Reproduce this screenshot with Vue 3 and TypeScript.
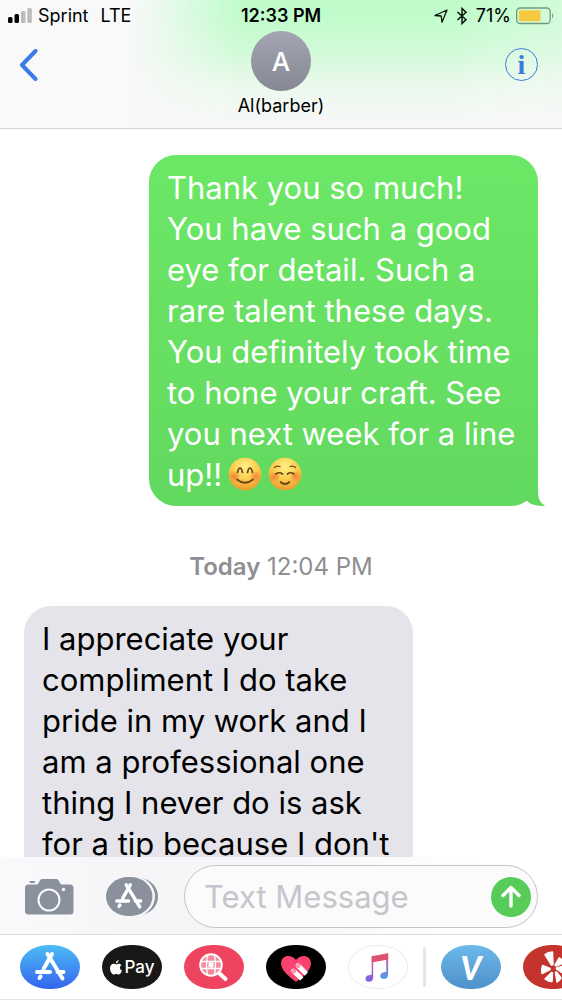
<script setup lang="ts">
import { ref } from 'vue'

interface Message {
  id: number
  from: 'me' | 'them'
  text: string
  emojis: ('blush' | 'relaxed')[]
}

const contact = { initial: 'A', name: 'Al(barber)' }

const sent: Message = {
  id: 1,
  from: 'me',
  text: 'Thank you so much!\nYou have such a good\neye for detail. Such a\nrare talent these days.\nYou definitely took time\nto hone your craft. See\nyou next week for a line\nup!!',
  emojis: ['blush', 'relaxed'],
}

const received: Message = {
  id: 2,
  from: 'them',
  text: "I appreciate your\ncompliment I do take\npride in my work and I\nam a professional one\nthing I never do is ask\nfor a tip because I don't",
  emojis: [],
}

const draft = ref('')
</script>

<template>
  <div class="phone">
    <header class="top">
      <div class="status">
        <div class="status-left">
          <svg class="signal" viewBox="0 0 24 16" aria-hidden="true">
            <rect x="0" y="9" width="4.500" height="6" rx="1.500" fill="#000" />
            <rect x="6.500" y="6" width="4.500" height="9" rx="1.500" fill="#000" />
            <rect x="13" y="3" width="4.500" height="12" rx="1.500" fill="#bcbcbe" />
            <rect x="19.300" y="0" width="4.500" height="15" rx="1.500" fill="#bcbcbe" />
          </svg>
          <span>Sprint</span>
          <span class="network">LTE</span>
        </div>
        <strong class="clock">12:33 PM</strong>
        <div class="status-right">
          <svg class="locate" viewBox="0 0 14 14" aria-hidden="true">
            <path d="M1 6.500 13 1 8 13.200 7.200 7Z" fill="none" stroke="#0c150e" stroke-width="1.300" stroke-linejoin="round" />
          </svg>
          <svg class="bluetooth" viewBox="0 0 12 18" aria-hidden="true">
            <path d="M1.500 5 10 12.700 6 16.500V1.500L10 5.300 1.500 13" fill="none" stroke="#0c150e" stroke-width="1.500" />
          </svg>
          <span>71%</span>
          <svg class="battery" viewBox="0 0 38 18" aria-hidden="true">
            <rect x="0.700" y="1" width="33.500" height="15.500" rx="3.500" fill="none" stroke="#75967d" stroke-width="1.300" />
            <rect x="3" y="3.200" width="21.500" height="11" rx="1" fill="#f8c93e" />
            <path d="M36 6q2.200 2.700 0 5.500Z" fill="#75967d" />
          </svg>
        </div>
      </div>
      <div class="nav">
        <button class="back" type="button" aria-label="Back">
          <svg viewBox="0 0 20 32" aria-hidden="true">
            <path d="M17.500 2 4 16 17.500 30" fill="none" stroke="#3b7be6" stroke-width="4" stroke-linecap="round" stroke-linejoin="round" />
          </svg>
        </button>
        <div class="contact">
          <div class="avatar">{{ contact.initial }}</div>
          <h1>{{ contact.name }}</h1>
        </div>
        <button class="info" type="button" aria-label="Details">i</button>
      </div>
    </header>

    <main class="thread">
      <div class="bubble me">
        <span>{{ sent.text }}</span>
        <svg v-for="e in sent.emojis" :key="e" class="emoji" :class="e" viewBox="0 0 34 34" role="img" :aria-label="e">
          <defs>
            <radialGradient :id="'skin-' + e" cx="50%" cy="28%" r="72%">
              <stop offset="0" stop-color="#fff08a" />
              <stop offset="0.500" stop-color="#fbd050" />
              <stop offset="1" stop-color="#ee9a2c" />
            </radialGradient>
            <radialGradient :id="'cheek-' + e">
              <stop offset="0" stop-color="#f4683c" stop-opacity="0.750" />
              <stop offset="1" stop-color="#f4683c" stop-opacity="0" />
            </radialGradient>
          </defs>
          <circle cx="17" cy="17" r="16.300" :fill="`url(#skin-${e})`" />
          <circle cx="6.500" cy="19.500" r="6" :fill="`url(#cheek-${e})`" />
          <circle cx="27.500" cy="19.500" r="6" :fill="`url(#cheek-${e})`" />
          <g fill="none" stroke="#6d4312" stroke-width="1.700" stroke-linecap="round" stroke-linejoin="round">
            <template v-if="e === 'blush'">
              <path d="M9.500 15.500Q10.500 11 12 11T14.500 15.500M19.500 15.500Q20.500 11 22 11T24.500 15.500" />
              <path d="M9 22.500Q17 29 25 22.500" />
            </template>
            <template v-else>
              <path d="M6.500 10.500Q8.500 8.500 12 9.500M22 9.500Q25.500 8.500 27.500 10.500" stroke-width="1.300" />
              <path d="M8 17Q11.500 14.500 14.500 17M19.500 17Q22.500 14.500 26 17" />
              <path d="M12.500 25Q17 29 21.500 25" />
            </template>
          </g>
        </svg>
        <svg class="tail" viewBox="0 0 30 27" aria-hidden="true">
          <path d="M0 0H22V13C22 19 24 24 29.500 27 21 27 15 26 11 22Z" fill="#62d95f" />
        </svg>
      </div>
      <p class="stamp"><b>Today</b> <time datetime="12:04">12:04 PM</time></p>
      <div class="bubble them">{{ received.text }}</div>
    </main>

    <form class="composer" @submit.prevent>
      <button class="tool camera" type="button" aria-label="Camera">
        <svg viewBox="0 0 49 37" aria-hidden="true">
          <path d="M3.500 6.500H12C14 6.500 14 1 17.500 1H31C34.500 1 34.500 6.500 37 6.500H45Q48.500 6.500 48.500 10V33Q48.500 36.500 45 36.500H3.500Q0 36.500 0 33V10Q0 6.500 3.500 6.500Z" fill="#8a919c" />
          <rect x="4.500" y="3" width="5.500" height="2" rx="1" fill="#8a919c" />
          <circle cx="24" cy="22" r="10.500" fill="none" stroke="#fafafc" stroke-width="2" />
          <circle cx="38.500" cy="11.500" r="1.700" fill="#fafafc" />
        </svg>
      </button>
      <button class="tool drawer" type="button" aria-label="Apps">
        <svg viewBox="0 0 52 39" aria-hidden="true">
          <rect x="10" y="1" width="42" height="37" rx="19" ry="18.500" fill="#8a919c" />
          <rect x="1" y="-1" width="48" height="41" rx="22" ry="20.500" fill="#f8f8fb" />
          <rect x="0" y="0" width="46.500" height="39" rx="22" ry="19.500" fill="#8a919c" />
          <g transform="translate(9 6) scale(0.900)" fill="none" stroke="#fff" stroke-width="3.800" stroke-linecap="round">
            <path d="M17 2 8.500 17M12.500 2 27.500 26.500M2 20H15M22.500 20H28.500M5.500 24.500 4.500 26" />
          </g>
        </svg>
      </button>
      <div class="field">
        <input v-model="draft" type="text" placeholder="Text Message" aria-label="Text Message" />
        <button class="send" type="submit" aria-label="Send">
          <svg viewBox="0 0 40 40" aria-hidden="true">
            <path d="M20 29V11M12 18.500 20 10.500 28 18.500" fill="none" stroke="#fff" stroke-width="3.400" stroke-linecap="round" stroke-linejoin="round" />
          </svg>
        </button>
      </div>
    </form>

    <nav class="apps" aria-label="iMessage apps">
      <button class="app store" type="button" aria-label="App Store">
        <svg viewBox="0 0 60 44" aria-hidden="true">
          <g transform="translate(15 7)" fill="none" stroke="#fff" stroke-width="4" stroke-linecap="round">
            <path d="M17 2 8.500 17M12.500 2 27.500 26.500M2 20H15M22.500 20H28.500M5.500 24.500 4.500 26" />
          </g>
        </svg>
      </button>
      <button class="app pay" type="button">
        <svg viewBox="0 0 12 15" aria-hidden="true">
          <path d="M8.600 0C8.700 1.800 7.400 3.400 5.900 3.400 5.700 1.700 7.200.200 8.600 0ZM11.400 5.200C9.200 6.500 9.500 9.400 12 10.400 11.300 12.600 9.900 14.600 8.700 14.600 7.700 14.600 7.300 14 6.200 14S4.700 14.600 3.800 14.600C2 14.600 0 11.300 0 8.300 0 5.200 1.800 3.700 3.600 3.700 4.800 3.700 5.500 4.400 6.300 4.400 7.100 4.400 7.800 3.700 9.100 3.700 10 3.700 10.900 4.300 11.400 5.200Z" fill="#fff" />
        </svg>
        Pay
      </button>
      <button class="app images" type="button" aria-label="Image search">
        <svg viewBox="0 0 60 44" aria-hidden="true">
          <circle cx="27" cy="20" r="10.800" fill="#f58a9b" stroke="#fff" stroke-width="2" />
          <g fill="none" stroke="#fff" stroke-width="1.300">
            <path d="M17 16.500H37M17 23.500H37M23.500 10Q21.500 20 23.500 30M30.500 10Q32.500 20 30.500 30" />
          </g>
          <rect x="24.500" y="17.500" width="5" height="5" fill="#fff" />
          <path d="M35 28 41.500 34" stroke="#fff" stroke-width="4" stroke-linecap="round" />
        </svg>
      </button>
      <button class="app touch" type="button" aria-label="Digital Touch">
        <svg viewBox="0 0 60 44" aria-hidden="true">
          <path d="M30 37C25 33 15 26 15 18.500 15 10.500 25 8.500 30 15 35 8.500 45 10.500 45 18.500 45 26 35 33 30 37Z" fill="#f9426f" />
          <g stroke="#fff" stroke-width="4.800" stroke-linecap="round">
            <path d="M32 20.500 40 28.500M27.500 26 36 34" />
          </g>
          <g fill="#fbb4c4" stroke="#f9426f" stroke-width="0.700">
            <circle cx="32.300" cy="20.700" r="1.700" />
            <circle cx="27.800" cy="26.200" r="1.700" />
          </g>
          <path d="M44 24 46 28 37 38 31 38Q39 32 44 24Z" fill="#000" />
        </svg>
      </button>
      <button class="app music" type="button" aria-label="Music">
        <svg viewBox="0 0 60 44" aria-hidden="true">
          <defs>
            <linearGradient id="note-left" x1="0" y1="0" x2="0" y2="1">
              <stop offset="0" stop-color="#e4567a" />
              <stop offset="1" stop-color="#7a62ee" />
            </linearGradient>
            <linearGradient id="note-right" x1="0" y1="0" x2="0" y2="1">
              <stop offset="0" stop-color="#d9526f" />
              <stop offset="0.500" stop-color="#a173d8" />
              <stop offset="1" stop-color="#4b9df0" />
            </linearGradient>
          </defs>
          <path d="M23.500 10.500 25 10V33Q24.500 37 20.500 37 17 37 17 33.700 17.500 30.500 20.500 30.200L23.500 29.500Z" fill="url(#note-left)" />
          <path d="M38.500 8H40.500V30Q40 34 36 34 32.500 34 32.300 31 32.500 27.700 36 27.300L38.500 26.500Z" fill="url(#note-right)" />
          <path d="M23.500 10.500 40.500 7.500V14L23.500 17Z" fill="#dc5272" />
        </svg>
      </button>
      <span class="divider" aria-hidden="true"></span>
      <button class="app venmo" type="button" aria-label="Venmo">V</button>
      <button class="app yelp" type="button" aria-label="Yelp">
        <svg viewBox="0 0 60 44" aria-hidden="true">
          <g fill="#fff" stroke="#fff" stroke-width="1.500" stroke-linejoin="round">
            <path d="M22 9.500Q25 7 29.500 7L30 19.500 28.500 20Z" />
            <path d="M19.500 20.500 27 23.500V24.500L19 28.500Q18 24 19.500 20.500Z" />
            <path d="M28.500 27.500 29.500 28 29 36.500Q25 36.500 22 34Z" />
            <path d="M32.500 27.500 33.500 27 38 33Q36 36 34 37Z" />
            <path d="M33.500 24V23L41 21Q42 25 41 29Z" />
            <path d="M32 20 36 13Q40 15 40.500 18L33 21Z" />
          </g>
        </svg>
      </button>
    </nav>
  </div>
</template>

<style>
body {
  margin: 0;
  background: #fff;
}
</style>

<style scoped>
.phone {
  display: flex;
  flex-direction: column;
  height: 100vh;
  overflow: hidden;
  background: #fff;
  color: #000;
  font-family: Inter, 'Liberation Sans', sans-serif;
}

button {
  padding: 0;
  border: 0;
  background: none;
  font: inherit;
  cursor: pointer;
}

svg {
  display: block;
  flex: none;
}

.top {
  position: relative;
  flex: none;
  isolation: isolate;
  border-bottom: 1px solid #d2d3d3;
  background: #f9f9f9;
}

.top::before {
  content: '';
  position: absolute;
  inset: 0;
  z-index: -1;
  background: linear-gradient(#c0fccb 12%, #d3fad9 42%, #ebf9ed 68%, #f7f8f7 95%);
  mask-image: linear-gradient(95deg, transparent 23%, #000 42%, #000 80%, rgb(0 0 0 / 65%) 100%);
}

.status {
  display: grid;
  grid-template-columns: 1fr auto 1fr;
  align-items: center;
  height: 31px;
  padding: 0 8px;
  font-size: 18px;
}

.status-left,
.status-right {
  display: flex;
  align-items: center;
}

.status-right {
  justify-content: flex-end;
}

.signal {
  width: 24px;
  height: 16px;
  margin-right: 6px;
}

.network {
  margin-left: 12px;
}

.clock {
  font-weight: 600;
}

.locate {
  width: 14px;
  height: 14px;
  margin-right: 8px;
}

.bluetooth {
  width: 12px;
  height: 18px;
  margin-right: 8px;
}

.battery {
  width: 38px;
  height: 18px;
  margin-left: 5px;
}

.nav {
  display: grid;
  grid-template-columns: 1fr auto 1fr;
  height: 97px;
  padding: 0 24px;
}

.back {
  justify-self: start;
  align-self: start;
  margin: 18px 0 0 -6px;
}

.back svg {
  width: 20px;
  height: 32px;
}

.contact {
  display: flex;
  flex-direction: column;
  align-items: center;
  gap: 4px;
}

.avatar {
  display: flex;
  align-items: center;
  justify-content: center;
  width: 60px;
  height: 60px;
  border-radius: 50%;
  background: linear-gradient(#a3a6b3, #858892);
  color: #fff;
  font-size: 26px;
  font-weight: 500;
}

h1 {
  margin: 0;
  font-size: 18px;
  font-weight: 400;
  line-height: 22px;
}

.info {
  justify-self: end;
  width: 33px;
  height: 33px;
  margin-top: 17px;
  border: 1px solid #3b7be0;
  border-radius: 50%;
  color: #3b7be0;
  font-family: 'Liberation Serif', serif;
  font-size: 28px;
  font-weight: 700;
  line-height: 30px;
}

.thread {
  display: flex;
  flex: 1;
  flex-direction: column;
  min-height: 0;
  padding: 26px 24px 0;
  overflow: hidden;
}

.bubble {
  position: relative;
  flex: none;
  box-sizing: border-box;
  width: 389px;
  padding: 12px 18px 11px;
  border-radius: 27px;
  font-size: 31px;
  line-height: 41px;
  white-space: pre-line;
}

.me {
  align-self: flex-end;
  background: linear-gradient(#6ce766, #62d95f);
  color: #fff;
}

.them {
  align-self: flex-start;
  padding-bottom: 48px;
  background: #e5e4ea;
}

.emoji {
  display: inline-block;
  width: 34px;
  height: 34px;
  margin-left: 6px;
  vertical-align: -5px;
}

.tail {
  position: absolute;
  right: -8px;
  bottom: 0;
  width: 30px;
  height: 27px;
}

.stamp {
  margin: 48px 0 26px;
  color: #8e8e93;
  font-size: 24px;
  line-height: 26px;
  text-align: center;
}

.stamp b {
  font-weight: 600;
}

.composer {
  display: flex;
  flex: none;
  align-items: center;
  padding: 8px 24px 6px 25px;
  border-bottom: 1px solid #dcdcde;
  background: linear-gradient(90deg, #fafafc, #f5f5f8 25%, #f7f7f9 55%, #fff 85%);
}

.camera svg {
  width: 49px;
  height: 37px;
}

.drawer {
  margin: 0 26px 0 32px;
}

.drawer svg {
  width: 52px;
  height: 39px;
}

.field {
  display: flex;
  flex: 1;
  align-items: center;
  min-width: 0;
  padding: 0 6px 0 19px;
  border: 1px solid #c3c3ca;
  border-radius: 32px;
  background: #fbfbfc;
}

.field input {
  flex: 1;
  min-width: 0;
  height: 61px;
  padding: 0;
  border: 0;
  outline: 0;
  background: none;
  color: #000;
  font: inherit;
  font-size: 31px;
}

.field input::placeholder {
  color: #c5c5cb;
  opacity: 1;
}

.send {
  width: 40px;
  height: 40px;
  border-radius: 50%;
  background: #57cc58;
}

.apps {
  display: flex;
  flex: none;
  gap: 22px;
  padding: 10px 0 10px 20px;
  overflow: hidden;
  border-bottom: 1px solid #e4e4e6;
}

.app {
  display: flex;
  flex: none;
  align-items: center;
  justify-content: center;
  box-sizing: border-box;
  width: 60px;
  height: 44px;
  border-radius: 28px / 22px;
  overflow: hidden;
  color: #fff;
}

.store {
  background: linear-gradient(#4dbdf5, #3464ef);
}

.pay {
  gap: 3px;
  background: #191817;
  font-size: 17px;
  font-weight: 500;
}

.pay svg {
  width: 12px;
  height: 15px;
}

.images {
  background: #ef4460;
}

.touch {
  background: #000;
}

.music {
  border: 1px solid #ececef;
}

.divider {
  flex: none;
  width: 3px;
  height: 40px;
  margin: 2px -7px 0;
  border-radius: 2px;
  background: #e6e6e9;
}

.venmo {
  background: linear-gradient(#6cb9ea, #4f90cb);
  font-family: Lato, sans-serif;
  font-size: 32px;
  font-style: italic;
  font-weight: 900;
}

.yelp {
  background: #c4342c;
}
</style>
